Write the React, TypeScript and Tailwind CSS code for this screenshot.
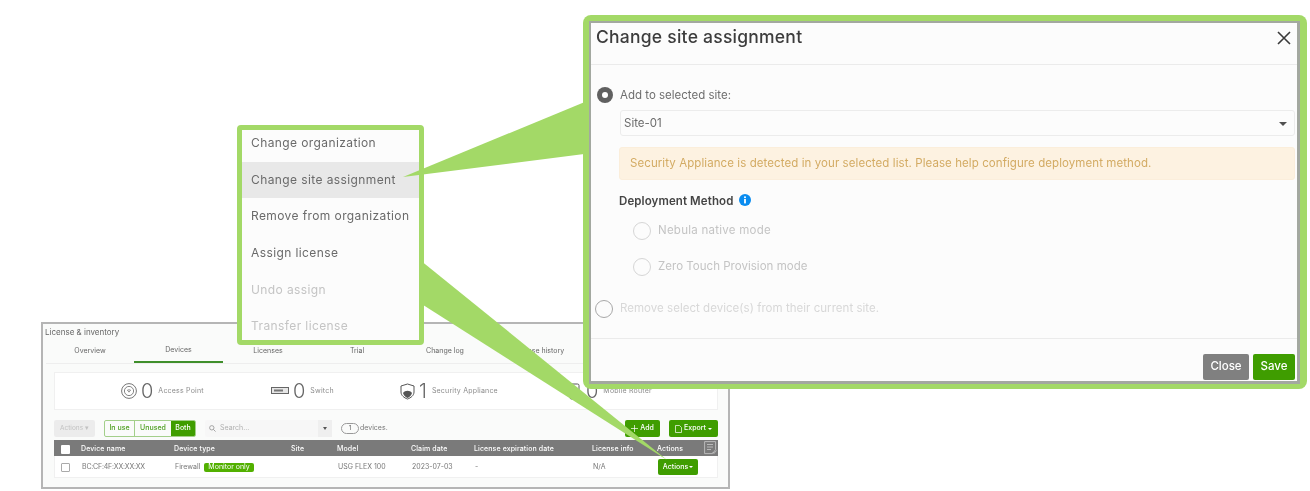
import React from "react";

const F = "font-['Inter','Liberation_Sans',sans-serif]";

function Radio({ muted }: { muted?: boolean }) {
  return <span className={`block w-[18px] h-[18px] rounded-full border-[1.5px] bg-[#fcfcfc] ${muted ? "border-[#d6d6d6]" : "border-[#a8a8a8]"}`} />;
}

function CalloutSite() {
  return (
    <svg className="absolute left-0 top-0" width="1310" height="491" viewBox="0 0 1310 491">
      <polygon points="403,177 592,99 592,153" fill="#a3d967" />
    </svg>
  );
}

function CalloutActions() {
  return (
    <svg className="absolute left-0 top-0" width="1310" height="491" viewBox="0 0 1310 491">
      <polygon points="420,260 667,460 420,303" fill="#a3d967" />
    </svg>
  );
}

function Modal() {
  return (
    <div className="absolute left-[583px] top-[15px] w-[724px] h-[374px] rounded-[8px] bg-[#a3d967] p-[6px] pr-[7px] pb-[5px]">
      <div className="flex flex-col h-full border-2 border-b-[3px] border-[#a3a8a0] border-r-[3px] bg-[#fcfcfc] blur-[0.25px]">
        <div className="flex items-center justify-between h-[42px] shrink-0 border-b border-[#ebebeb] pl-[5px] pr-[6px] pb-[12px]">
          <span className="text-[17.5px] font-medium text-[#3d3d3d] tracking-[0.24px]">Change site assignment</span>
          <svg width="14" height="14" viewBox="0 0 14 14"><path d="M1 1 13 13M13 1 1 13" stroke="#3a3a3a" strokeWidth="1.6" fill="none" /></svg>
        </div>
        <div className="flex flex-col flex-1 pl-[5px] pr-[2px]">
          <div className="flex items-center gap-[7px] mt-[21px] h-[18px]">
            <span className="flex items-center justify-center w-[16px] h-[16px] ml-[1px] rounded-full bg-[#606060]"><span className="w-[6px] h-[6px] rounded-full bg-white" /></span>
            <span className="text-[11.5px] text-[#6e6e6e] pt-[1px]">Add to selected site:</span>
          </div>
          <div className="ml-[24px] mt-[6px] h-[26px] flex items-center justify-between border border-[#ececec] rounded-[3px] px-[3px] pr-[7px] pt-[1px]">
            <span className="text-[11.5px] text-[#6b6b6b]">Site-01</span>
            <span className="w-0 h-0 border-x-[4px] border-x-transparent border-t-[4px] border-t-[#505050]" />
          </div>
          <div className="ml-[23px] mt-[11px] h-[33px] flex items-center bg-[#fdf2e1] border border-[#fbeedb] rounded-[3px] pl-[10px]">
            <span className="text-[11.5px] text-[#d3ab63] tracking-[0.08px]">Security Appliance is detected in your selected list. Please help configure deployment method.</span>
          </div>
          <div className="flex items-center ml-[23px] mt-[14px] h-[16px]">
            <span className="text-[11.5px] font-semibold text-[#444444] tracking-[0.1px]">Deployment Method</span>
            <svg width="12" height="12" viewBox="0 0 12 12" className="ml-[6px] -mt-[5px]"><circle cx="6" cy="6" r="6" fill="#0a8cf0" /><rect x="5.1" y="5" width="1.8" height="4.4" fill="#fff" /><rect x="5.1" y="2.4" width="1.8" height="1.7" fill="#fff" /></svg>
          </div>
          <div className="flex items-center gap-[7px] ml-[37px] mt-[12px] h-[18px]">
            <Radio muted /><span className="text-[11.5px] text-[#c4c4c4] tracking-[0.25px]">Nebula native mode</span>
          </div>
          <div className="flex items-center gap-[7px] ml-[37px] mt-[18px] h-[18px]">
            <Radio muted /><span className="text-[11.5px] text-[#c4c4c4] tracking-[0.02px]">Zero Touch Provision mode</span>
          </div>
          <div className="flex items-center gap-[7px] -ml-[1px] mt-[24px] h-[18px]">
            <Radio /><span className="text-[11.5px] text-[#d8d8d8] tracking-[0.03px]">Remove select device(s) from their current site.</span>
          </div>
        </div>
        <div className="h-[43px] shrink-0 border-t border-[#ebebeb] flex justify-end gap-[4px] pt-[15px] pr-[2px]">
          <span className="w-[46px] h-[26px] flex items-center justify-center rounded-[2px] bg-[#808080] text-white text-[11.5px] font-medium">Close</span>
          <span className="w-[42px] h-[26px] flex items-center justify-center rounded-[2px] bg-[#3f9d00] text-white text-[11.5px] font-medium">Save</span>
        </div>
      </div>
    </div>
  );
}

function Menu() {
  const items: [string, string][] = [
    ["Change organization", "text-[#6a6a6a]"],
    ["Change site assignment", "text-[#6a6a6a] bg-[#e8e8e8]"],
    ["Remove from organization", "text-[#6a6a6a]"],
    ["Assign license", "text-[#6a6a6a]"],
    ["Undo assign", "text-[#c4c4c4]"],
    ["Transfer license", "text-[#c4c4c4]"],
  ];
  return (
    <div className="absolute left-[237px] top-[125px] w-[187px] h-[220px] rounded-[4px] border-[5px] border-[#a3d967] bg-[#fcfcfc] overflow-hidden">
      <div className="-mt-[5px] blur-[0.25px]">
        {items.map(([t, c]) => (
          <div key={t} className={`h-[36.6px] flex items-center pl-[9px] text-[12px] tracking-[0.4px] ${c}`}>{t}</div>
        ))}
      </div>
    </div>
  );
}

function Stat({ icon, n, label, cls }: { icon: React.ReactNode; n: string; label: string; cls: string }) {
  return (
    <div className={`flex items-center ${cls}`}>
      {icon}
      <span className="text-[20px] leading-none text-[#666666] font-light">{n}</span>
      <span className="ml-[1px] text-[7px] text-[#8c8c8c] tracking-[0.2px]">{label}</span>
    </div>
  );
}

function Table() {
  const cols = "grid grid-cols-[27px_93px_117px_46px_74px_63px_118px_65px_61px] items-center";
  return (
    <div className="absolute left-[41px] top-[322px] w-[689px] h-[167px] border-2 border-[#b5b5b5] bg-[#fafbfa]">
      <div className="blur-[0.4px]">
        <div className="pl-[2px] pt-[2px] h-[13px] flex items-center text-[8px] leading-none text-[#666666]">License &amp; inventory</div>
        <div className="flex h-[25px] mt-[2px] border-b border-[#eeeeee] ml-[3px] text-[7px] text-[#666666] items-center">
          <span className="w-[88px] text-center">Overview</span>
          <span className="w-[89px] h-full flex items-center justify-center border-b-2 border-[#3f8f2b]">Devices</span>
          <span className="w-[90px] text-center">Licenses</span>
          <span className="w-[88px] text-center">Trial</span>
          <span className="w-[88px] text-center">Change log</span>
          <span className="w-[100px] text-center">License history</span>
        </div>
        <div className="ml-[11px] mr-[10px] mt-[8px] h-[38px] border border-[#f0f0f0] bg-white flex items-center">
          <Stat cls="ml-[66px] gap-[4px] w-[150px]" n="0" label="Access Point" icon={
            <svg width="16" height="16" viewBox="0 0 16 16" fill="none"><circle cx="8" cy="8" r="7.4" stroke="#666" strokeWidth=".9" /><circle cx="8" cy="8" r="4.6" stroke="#777" strokeWidth=".9" /><path d="M6 7.6c1.2-1 2.8-1 4 0M7 8.8c.6-.4 1.4-.4 2 0" stroke="#555" strokeWidth=".7" /></svg>
          } />
          <Stat cls="gap-[4px] w-[129px]" n="0" label="Switch" icon={
            <svg width="18" height="8" viewBox="0 0 18 8" fill="none"><rect x=".5" y=".5" width="17" height="6" fill="#e6e6e6" stroke="#666" /><rect x="3" y="2.5" width="9" height="2" fill="#777" /></svg>
          } />
          <Stat cls="gap-[4px] w-[167px]" n="1" label="Security Appliance" icon={
            <svg width="15" height="17" viewBox="0 0 15 17" fill="none"><path d="M7.5 1 14 3v6c0 3.4-3 5.8-6.5 7C4 14.8 1 12.4 1 9V3z" stroke="#555" strokeWidth="1" /><path d="M3 10c2-3 7-3 9 0-1 3-2.5 4-4.5 5C5.500 14 4 13 3 10z" fill="#555" /></svg>
          } />
          <Stat cls="gap-[4px]" n="0" label="Mobile Router" icon={
            <svg width="15" height="17" viewBox="0 0 15 17" fill="none"><rect x="3" y="1" width="9" height="15" rx="1.5" stroke="#555" /></svg>
          } />
        </div>
        <div className="flex items-center ml-[11px] mr-[10px] mt-[10px] h-[17px]">
          <span className="w-[41px] h-[17px] flex items-center justify-center rounded-[2px] bg-[#ececec] text-[6.5px] text-[#c2c2c2]">Actions ▾</span>
          <div className="ml-[9px] flex h-[17px] w-[92px] border border-[#a3cf8a] rounded-[2px] text-[7px] font-medium overflow-hidden">
            <span className="w-[30px] flex items-center justify-center border-r border-[#a3cf8a] text-[#4b9d1c]">In use</span>
            <span className="w-[36px] flex items-center justify-center text-[#4b9d1c]">Unused</span>
            <span className="flex-1 flex items-center justify-center bg-[#3f9d00] text-white">Both</span>
          </div>
          <div className="ml-[9px] flex h-[17px] w-[127px] bg-[#f7f7f7] items-center rounded-[2px]">
            <svg width="7" height="7" viewBox="0 0 8 8" fill="none" className="ml-[4px]"><circle cx="3.2" cy="3.2" r="2.5" stroke="#999" /><path d="M5 5 7.5 7.5" stroke="#999" /></svg>
            <span className="ml-[4px] text-[7px] text-[#b0b0b0] flex-1">Search...</span>
            <span className="w-[14px] h-full flex items-center justify-center bg-[#efefef]"><span className="w-0 h-0 border-x-[2.5px] border-x-transparent border-t-[3px] border-t-[#555]" /></span>
          </div>
          <span className="ml-[9px] w-[18px] h-[11px] flex items-center justify-center rounded-full border border-[#999] text-[6.5px] text-[#666]">1</span>
          <span className="ml-[1px] text-[7px] text-[#777]">devices.</span>
          <span className="ml-auto w-[35px] h-[17px] flex items-center justify-center gap-[2px] rounded-[2px] bg-[#3f9d00] text-white text-[7px] font-medium">
            <svg width="7" height="7" viewBox="0 0 7 7" fill="none"><path d="M3.5 0v7M0 3.5h7" stroke="#fff" strokeWidth=".7" /></svg>Add</span>
          <span className="ml-[9px] w-[49px] h-[17px] flex items-center justify-center gap-[2px] rounded-[2px] bg-[#3f9d00] text-white text-[7px] font-medium">
            <svg width="7" height="8" viewBox="0 0 7 8" fill="none"><path d="M.5.5h4l2 2v5h-6z" stroke="#fff" strokeWidth=".7" /></svg>Export<span className="w-0 h-0 border-x-[2px] border-x-transparent border-t-[2.5px] border-t-white" /></span>
        </div>
        <div className={`${cols} relative ml-[11px] mr-[10px] mt-[3px] h-[16px] pt-[2px] bg-[#7a7a7a] text-[7px] font-medium text-white tracking-[0.1px]`}>
          <span className="ml-[7px] w-[9px] h-[9px] bg-white rounded-[1px]" />
          <span>Device name</span><span>Device type</span><span>Site</span><span>Model</span><span>Claim date</span><span>License expiration date</span><span>License info</span><span>Actions</span>
          <svg width="13" height="14" viewBox="0 0 13 14" fill="none" className="absolute right-[1px] top-[1px]"><path d="M.6.6h11v8l-3 4H.6z" stroke="#c9c9c9" strokeWidth=".8" /><path d="M3 3.5h6M3 6h6M3 8.5h4M8.5 11 10 12.5l2.5-3" stroke="#c9c9c9" strokeWidth=".8" /></svg>
        </div>
        <div className={`${cols} ml-[11px] mr-[10px] h-[22px] pt-[1px] border border-t-0 border-[#f0f0f0] bg-white text-[7px] text-[#777777]`}>
          <span className="ml-[6px] w-[9px] h-[9px] border border-[#aaa] rounded-[1px]" />
          <span className="tracking-[-0.2px]">BC:CF:4F:XX:XX:XX</span>
          <span className="flex items-center gap-[4px]">Firewall<span className="h-[9px] px-[4px] flex items-center rounded-[2px] bg-[#52b000] text-white">Monitor only</span></span>
          <span />
          <span>USG FLEX 100</span><span>2023-07-03</span><span>-</span><span>N/A</span>
          <span className="w-[40px] h-[16px] flex items-center justify-center gap-[1px] rounded-[2px] bg-[#3f9d00] text-white font-medium">Actions<span className="w-0 h-0 border-x-[2px] border-x-transparent border-t-[2.5px] border-t-white" /></span>
        </div>
      </div>
    </div>
  );
}

export default function App() {
  return (
    <div className={`relative w-[1310px] h-[491px] bg-white overflow-hidden ${F}`}>
      <Table />
      <CalloutActions />
      <Menu />
      <CalloutSite />
      <Modal />
    </div>
  );
}
